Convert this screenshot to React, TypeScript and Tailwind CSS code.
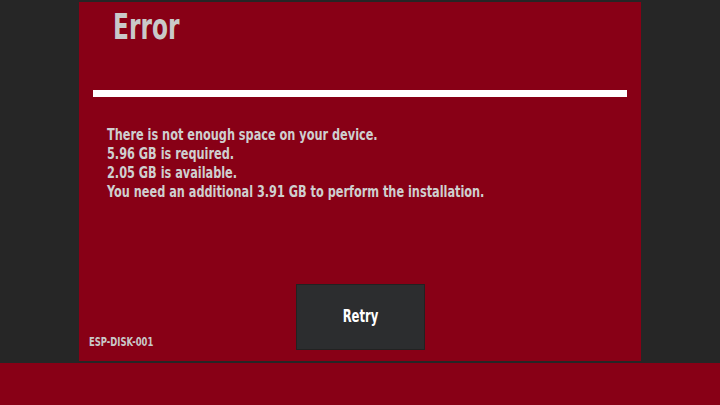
const font = { fontFamily: '"DejaVu Sans Condensed", "Liberation Sans", sans-serif' };

export default function App() {
  return (
    <div className="flex h-[405px] w-[720px] flex-col overflow-hidden bg-[#262626]" style={font}>
      <div className="mx-[79px] mt-[2px] flex h-[359px] w-[562px] flex-col bg-[#880016]">
        <h1 className="ml-[34px] mt-[5px] h-[40px] origin-left scale-x-[0.74] text-[35px] font-bold leading-[40px] text-[#c9c9c9]">
          Error
        </h1>
        <div className="mx-[14px] mt-[43px] h-[7px] bg-white" />
        <div className="ml-[28px] mt-[28px] origin-left scale-x-[0.785] text-[16px] font-bold leading-[19px] text-[#cfcfcf]">
          <p>There is not enough space on your device.</p>
          <p>5.96 GB is required.</p>
          <p>2.05 GB is available.</p>
          <p>You need an additional 3.91 GB to perform the installation.</p>
        </div>
        <div className="mt-auto mb-[11px] grid grid-cols-[1fr_auto_1fr] items-end">
          <span className="ml-[10px] mb-[1px] origin-left scale-x-[0.72] text-[13px] font-bold leading-[14px] text-[#c9c9c9]">
            ESP-DISK-001
          </span>
          <button className="flex h-[66px] w-[129px] items-center justify-center border border-[#222] bg-[#2c2d2f] text-[17px] font-bold text-white">
            <span className="scale-x-[0.76]">Retry</span>
          </button>
          <span />
        </div>
      </div>
      <div className="mt-[2px] h-[42px] w-full bg-[#880016]" />
    </div>
  );
}
